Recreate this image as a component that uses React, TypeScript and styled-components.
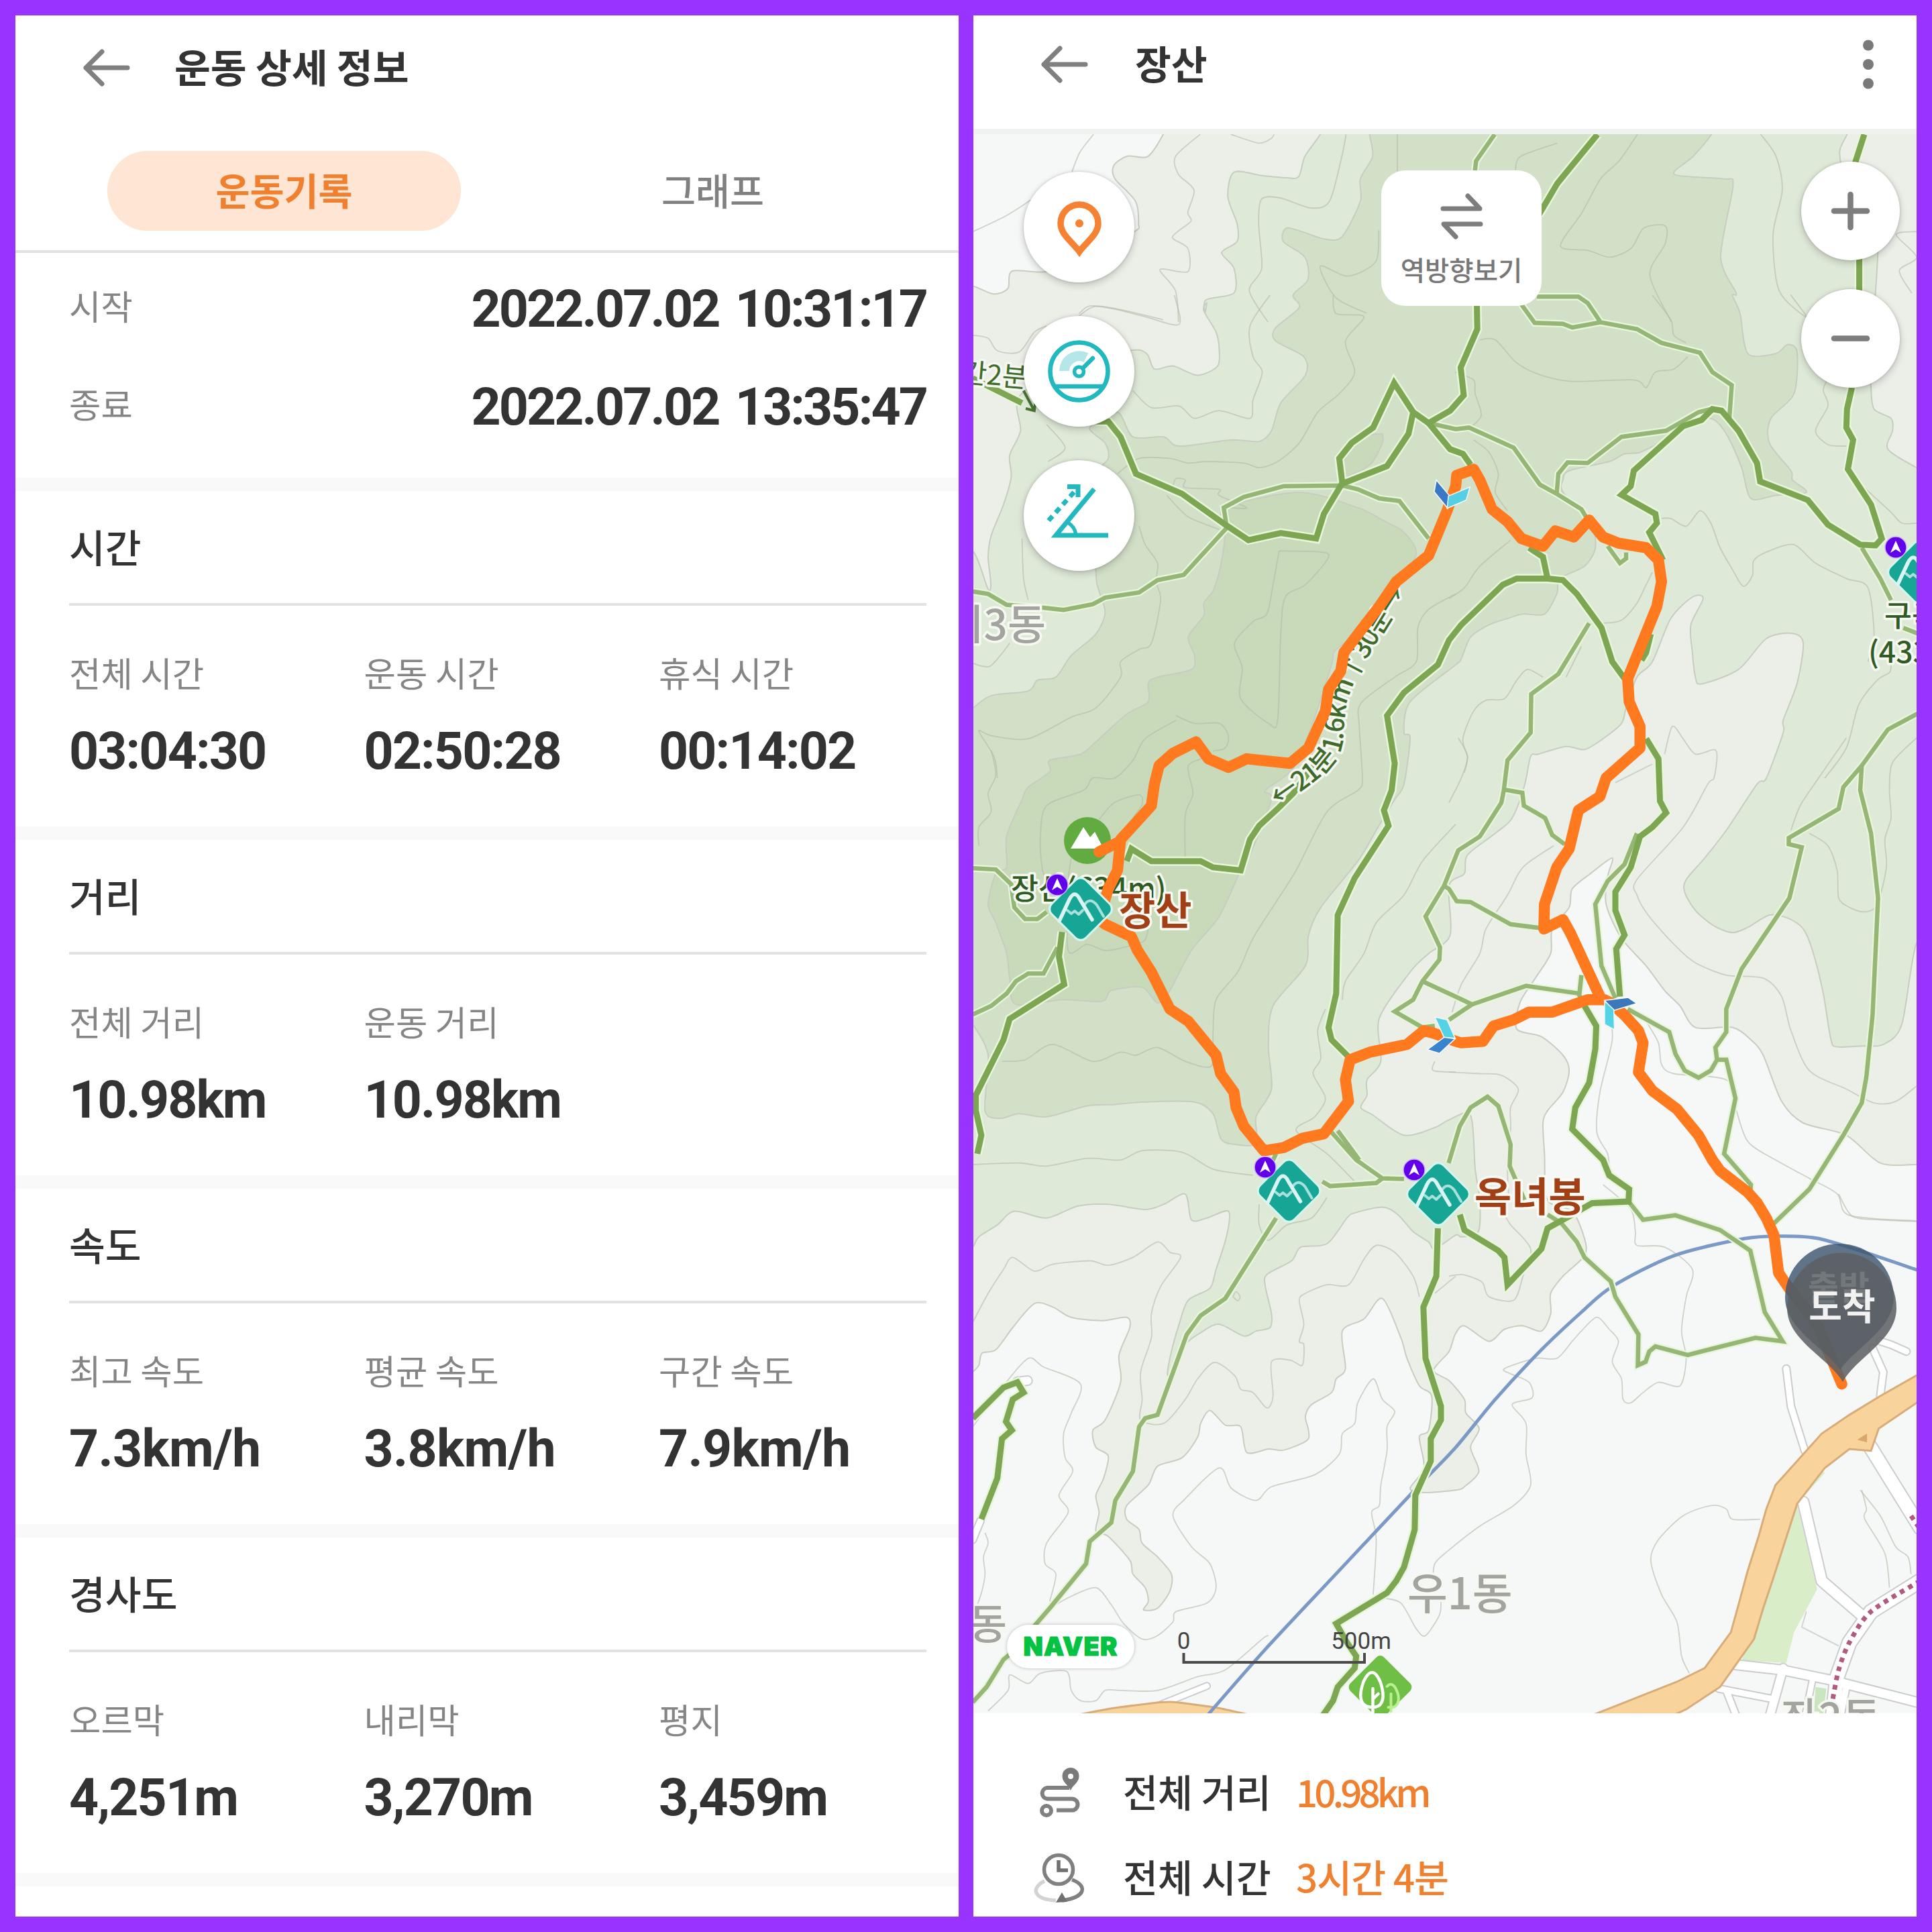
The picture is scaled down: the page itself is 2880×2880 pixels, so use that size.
import React from "react";
import styled, { createGlobalStyle } from "styled-components";

const GlobalStyle = createGlobalStyle`
  body {
    margin: 0;
    background-color: #9933ff;
    font-family: "Noto Sans CJK KR", "Noto Sans", sans-serif;
  }
  * {
    box-sizing: border-box;
  }
`;

const Screens = styled.div`
  display: flex;
  gap: 22px;
  width: 2880px;
  height: 2880px;
  padding: 23px;
  background-color: #9933ff;
`;

const Panel = styled.section`
  display: flex;
  flex-direction: column;
  width: 1406px;
  height: 2834px;
  overflow: hidden;
  background-color: #fff;
`;

const Header = styled.header<{ $height: number; $lift?: number }>`
  display: flex;
  align-items: center;
  flex: none;
  height: ${(p) => p.$height}px;
  padding: 0 62px ${(p) => p.$lift || 0}px 98px;
`;

const Title = styled.h1<{ $indent: number }>`
  flex: 1;
  margin: -5px 0 0 ${(p) => p.$indent}px;
  font-size: 58.5px;
  line-height: 1;
  font-weight: 700;
  color: #333;
`;

const Tabs = styled.nav`
  display: flex;
  gap: 112px;
  flex: none;
  height: 198px;
  padding: 46px 0 0 137px;
  border-bottom: 4px solid #e1e1e1;
`;

const Tab = styled.div<{ $active?: boolean }>`
  width: 527px;
  height: 119px;
  border-radius: 60px;
  background-color: ${(p) => (p.$active ? "#ffe5d3" : "transparent")};
  color: ${(p) => (p.$active ? "#f07f2e" : "#808080")};
  font-size: 55.5px;
  font-weight: ${(p) => (p.$active ? 700 : 500)};
  line-height: 115px;
  text-align: center;
`;

const Summary = styled.div`
  flex: none;
  height: 335px;
  padding: 8px 48px 0 80px;
`;

const SummaryRow = styled.div`
  display: flex;
  align-items: center;
  justify-content: space-between;
  height: 146px;
`;

const Label = styled.div`
  font-size: 51.5px;
  line-height: 60px;
  margin-top: -6px;
  color: #858585;
  white-space: nowrap;
`;

const Value = styled.div<{ $spacing?: number }>`
  font-family: Roboto, sans-serif;
  font-size: 77px;
  font-weight: 700;
  line-height: 80px;
  letter-spacing: ${(p) => p.$spacing ?? -1.9}px;
  color: #333;
  white-space: nowrap;
`;

const DateValue = styled(Value)`
  margin-top: 6px;
  letter-spacing: -2.9px;
  word-spacing: 8px;
`;

const Group = styled.section`
  flex: none;
  height: 520px;
  padding: 0 48px 0 80px;
  border-top: 20px solid #f9f9fa;
`;

const GroupTitle = styled.h2`
  height: 171px;
  margin: 0;
  border-bottom: 4px solid #e1e1e1;
  font-size: 58.5px;
  font-weight: 500;
  line-height: 164px;
  color: #333;
`;

const Stats = styled.div`
  display: grid;
  grid-template-columns: repeat(3, 439.5px);
  padding-top: 75px;
`;

const Stat = styled.div`
  display: flex;
  flex-direction: column;
  gap: 48px;
`;

const MapArea = styled.div`
  position: relative;
  flex: none;
  height: 2362px;
  overflow: hidden;
`;

const MapCanvas = styled.svg`
  display: block;
  width: 1406px;
  height: 2362px;
`;

const ButtonStack = styled.div<{ $side: "left" | "right" }>`
  position: absolute;
  top: ${(p) => (p.$side === "left" ? 64 : 49)}px;
  ${(p) => (p.$side === "left" ? "left: 75px" : "right: 25px")};
  display: flex;
  flex-direction: column;
  gap: ${(p) => (p.$side === "left" ? 50 : 43)}px;
`;

const RoundButton = styled.button<{ $size: number }>`
  width: ${(p) => p.$size}px;
  height: ${(p) => p.$size}px;
  padding: 0;
  border: none;
  border-radius: 50%;
  background-color: #fff;
  box-shadow: 0 4px 12px rgba(0, 0, 0, 0.2), 0 0 4px rgba(0, 0, 0, 0.15);

  svg {
    display: block;
    width: 100%;
    height: 100%;
  }
`;

const ReverseButton = styled.button`
  position: absolute;
  top: 62px;
  left: 608px;
  display: flex;
  flex-direction: column;
  align-items: center;
  gap: 16px;
  width: 239px;
  height: 202px;
  padding: 30px 0 0;
  border: none;
  border-radius: 36px;
  background-color: #fff;
  font-family: inherit;
  font-size: 39.5px;
  font-weight: 500;
  line-height: 50px;
  color: #777;
  white-space: nowrap;
`;

const NaverBadge = styled.div`
  position: absolute;
  left: 50px;
  top: 2230px;
  width: 190px;
  height: 65px;
  border-radius: 33px;
  background-color: #fff;
  box-shadow: 0 0 5px rgba(0, 0, 0, 0.25);
  font-family: Inter, sans-serif;
  font-size: 38px;
  font-weight: 900;
  line-height: 65px;
  letter-spacing: 1.2px;
  text-align: center;
  color: #06c242;
  -webkit-text-stroke: 1.2px #06c242;
`;

const Totals = styled.footer`
  padding: 55px 0 0 90px;
`;

const TotalRow = styled.div`
  display: grid;
  grid-template-columns: 133px 258px auto;
  align-items: center;
  height: 127px;
  font-size: 56.5px;
  line-height: 1;
  font-weight: 500;
  color: #333;
  white-space: nowrap;
`;

const TotalText = styled.span<{ $accent?: boolean; $tight?: number }>`
  margin-top: -6px;
  letter-spacing: ${(p) => p.$tight || 0}px;
  color: ${(p) => (p.$accent ? "#f07f2e" : "#333")};
`;

const groups = [
  {
    title: "시간",
    stats: [
      ["전체 시간", "03:04:30"],
      ["운동 시간", "02:50:28"],
      ["휴식 시간", "00:14:02"],
    ],
  },
  {
    title: "거리",
    stats: [
      ["전체 거리", "10.98km"],
      ["운동 거리", "10.98km"],
    ],
  },
  {
    title: "속도",
    spacing: -0.7,
    stats: [
      ["최고 속도", "7.3km/h"],
      ["평균 속도", "3.8km/h"],
      ["구간 속도", "7.9km/h"],
    ],
  },
  {
    title: "경사도",
    stats: [
      ["오르막", "4,251m"],
      ["내리막", "3,270m"],
      ["평지", "3,459m"],
    ],
  },
];

// Map sheets: x origin, y origin, x scale, y scale.
const K = 720 / 1568;
const sheets: Record<string, number[]> = {
  P: [0, 0, 1, 1],
  T: [1440, 0, 1440 / 1568, 1 / 3],
  NW: [1450, 440, K, K],
  NE: [2160, 440, K, K],
  W: [1450, 1100, K, K],
  E: [2160, 1100, K, K],
  SW: [1450, 1780, K, 800 / 1568],
  SE: [2160, 1780, K, 800 / 1568],
};

// "NW 10,20 30,40 NE 5,6": a sheet name applies to the points after it.
const points = (src: string): number[][] => {
  let s = sheets.P;
  const out: number[][] = [];
  src
    .trim()
    .split(/\s+/)
    .forEach((t) => {
      if (sheets[t]) {
        s = sheets[t];
        return;
      }
      const [x, y] = t.split(",").map(Number);
      out.push([s[0] + x * s[2], s[1] + y * s[3]]);
    });
  return out;
};

const f = (n: number) => n.toFixed(1);

const line = (src: string) =>
  "M" +
  points(src)
    .map(([x, y]) => `${f(x)} ${f(y)}`)
    .join("L");

const curve = (src: string) => {
  const p = points(src);
  let d = `M${f(p[0][0])} ${f(p[0][1])}`;
  for (let i = 0; i < p.length - 1; i++) {
    const a = p[i - 1] || p[i];
    const b = p[i];
    const c = p[i + 1];
    const e = p[i + 2] || c;
    d += `C${f(b[0] + (c[0] - a[0]) / 7)} ${f(b[1] + (c[1] - a[1]) / 7)} ${f(
      c[0] - (e[0] - b[0]) / 7
    )} ${f(c[1] - (e[1] - b[1]) / 7)} ${f(c[0])} ${f(c[1])}`;
  }
  return d;
};

const terrain: [string, string][] = [
  [
    "#ecefe8",
    `T 320,560 320,601 295,700 262,698 240,740 242,800 275,900 280,1000 274,1035 200,1150 130,1215 75,1212 68,1290 45,1315 12,1280 -20,1270
     SW -30,540 0,520 20,500 30,465 75,455 130,390 200,320 260,330 320,360 420,370 500,360 510,390 475,470 480,550 430,660 390,690 400,740 440,765 425,830 400,880 410,930 400,985 440,1000 510,1070 520,1110 560,1150 570,1190 555,1215 600,1210 640,1160 645,1110 600,1060 550,1020 540,980 500,950 500,910 570,850 600,795 680,770 730,710 740,670 770,632 820,675 870,680 890,755 960,745 1010,748 1085,720 1090,690 1080,650 1100,615 1165,580 1180,540 1210,510 1200,400 1270,365 1330,305 1390,420 1410,480 1450,560 1490,590 1480,690 1450,710 1465,800 1420,860 1465,872 1568,865
     SE 50,855 97,810 70,740 98,685 55,640 50,600 0,545 -50,515 0,460 20,410 50,385 130,430 180,395 240,385 300,400 330,350 330,290 370,240 440,180 440,130 400,50
     E 320,1500 310,1350 305,1250 320,1210 370,1150 390,1080 370,1030 300,970 220,945 230,860 280,780 330,700 335,620 390,550 400,490 460,440 530,390 515,450 510,540 560,650 640,740 700,820 750,870 800,940 920,940 980,980 1020,1030 1080,1180 1150,1250 1290,1290 1400,1380 1518,1385 1600,1385
     P 2900,150`,
  ],
  [
    "#dfe9d8",
    `T 575,560 575,601 550,700 540,790 520,795 480,785 435,770 425,880 440,1000 440,1080 415,1130 435,1200 435,1310 390,1340 388,1400
     NW 760,25 750,50 790,120 800,170 795,230 730,260 650,230 590,240 565,190 510,180 300,240 150,330 155,440 120,520 125,590 100,680 60,780 50,850 55,960 -30,960
     SW -30,165 0,155 20,125 80,90 135,50 240,70 340,35 440,30 560,45 620,30 690,0 710,75 760,70 830,50 825,120 790,220 770,275 700,310 670,380 640,480 635,530 690,440 740,405 800,380 880,415 920,400 965,390 970,350 950,270 955,235 1035,195 1065,155 1150,145 1215,70 1240,55 1330,38 1380,60 1430,110 1480,140 1500,160 1568,120
     SE 40,125 95,110 E 100,1500 85,1400 70,1225 0,1240 W 1500,1265 1400,1290 1300,1225 1260,1200 1280,1160 1280,1110 1325,1050 1320,910 1420,760 1480,700 1550,640
     E 0,480 50,440 60,380 150,310 205,260 245,155 265,60 NE 290,1490 380,1465 440,1475 500,1440 560,1390 575,1340 610,1240 660,1190 720,1050 790,980 825,985 785,1070 790,1160 800,1240 820,1262 940,1215 1030,1115 1115,1098 1150,1130 1130,1260 1085,1380 1085,1420 1030,1568
     E 1000,150 900,300 830,390 770,460 765,500 800,560 860,610 920,632 970,615 1040,575 1100,585 1150,620 1180,690 1215,830 1240,980 1260,1003 1340,1000 1410,995 1470,930 1518,665 1600,600
     NE 1600,600 1518,560 1425,500 1440,440 1435,400 1380,370 1370,300 1370,200 T 1480,950 1430,800 1418,680 1430,601 1430,560`,
  ],
  [
    "#d3e0c8",
    `T 655,560 655,601 660,700 640,800 640,900 610,1060 580,1068 550,1040 520,1020 515,1080 550,1150 555,1250
     NW 1040,0 1060,40 980,110 985,150 1075,200 1080,260 1000,350 970,440 930,475 840,470 670,490 620,460 520,460 470,380 380,430 430,480 440,530 400,600 400,900 410,960 430,1030 400,1100 320,1170 270,1240 210,1250 180,1285 60,1300 0,1340 -40,1350
     W -40,900 0,930 50,1030 40,1210 90,1235 150,1220 240,1230 370,1195 460,1190 560,1182 720,1182 780,1220 805,1300 840,1318 920,1318 920,1230 970,1140 960,1000 975,870 1080,740 1090,640 1130,550 1250,400 1310,300 1370,200 1400,150 1420,0
     NW 1400,1420 1420,1320 1568,1200 NE 40,1180 70,1110 130,1070 190,1050 240,1035 310,1035 350,970 360,920 440,880 475,820 460,740 370,640 370,600 390,570 520,540 570,515 620,510 700,470 770,430 850,400 900,450 950,560 980,660 1060,650 1160,640 1115,600 1110,570 1040,480 1045,400 1120,320 1130,185 1100,160 1060,190 970,190 945,60 920,0
     T 1250,1310 1225,1150 1245,830 1230,800 1150,780 1180,700 1210,601 1210,560`,
  ],
  [
    "#c8dab9",
    `NW 820,760 820,690 1060,640 1250,690 1330,730 1400,770 1440,840 1380,930 1300,1060 1180,1150 1165,1200 1100,1400
     W 1040,100 950,170 970,200 900,380 870,430 800,580 710,690 640,820 600,860 550,810 450,820 420,855 290,850 140,865 120,780 110,700 75,600 50,540 75,440 110,420 110,320 160,200 180,160 250,110
     NW 250,1510 350,1490 400,1450 500,1360 570,1320 570,1260 600,1240 710,1215 720,1170 700,1110 750,1040 750,1000 780,960 800,900 815,820 820,760`,
  ],
  ["#c8dab9", "NW 1330,450 1290,455 1240,490 1205,540 1205,590 1290,550 1330,480 1330,450"],
];

const contours = [
  "T 207,601 185,680 172,768",
  "T 105,895 65,965 12,1035",
  "T 380,601 340,700 345,780 370,850 360,950 365,990 335,1060 360,1110 360,1215 315,1205 340,1300 345,1440",
  "T 430,601 475,640 495,620 500,601",
  "T 180,1420 210,1370 260,1390 320,1430",
  "T 617,601 610,700 590,900 560,930 510,885 480,890 475,1000 480,1200 460,1300 490,1440",
  "T 700,601 700,765",
  "T 960,640 900,700 892,760",
  "T 1090,601 1060,720 1030,800 1000,950 965,1100 1010,1120 1045,1150 1080,1110 1100,1020 1135,1010 1135,1090 1110,1230 1145,1440",
  "T 1290,601 1315,700 1325,850 1310,1050 1320,1300 1365,1420 NE 1110,0 1155,60",
  "T 670,1030 665,1170 620,1235 575,1190 600,1330 650,1400",
  "T 1543,1035 1510,1050 T 1543,1150 1515,1210 1535,1310",
  "NW 345,60 380,35 460,45 560,70 670,95 655,0",
  "NW 0,130 50,140 80,180 150,185 200,120 240,100",
  "NW 965,0 900,100 910,200 940,250 910,340 900,400 800,375 720,400 670,360 580,365 520,310",
  "NW 1170,0 1180,60 1270,70 1210,150 1240,250 1190,320 1120,380 1060,480 990,540 930,560 880,545 760,540 700,545 640,530 540,530 470,580",
  "NW 240,420 300,495 245,540",
  "NW 160,790 165,920 180,990",
  "NW 540,750 560,810 600,870 595,930 610,990 580,1130 540,1150 480,1190 480,1240 400,1340 320,1370 180,1440 60,1430 20,1415 70,1500 80,1568",
  "NW 650,620 660,595 690,600 690,625 800,630 800,650 890,690 830,690",
  "NW 630,650 700,720 800,760",
  "NW 995,830 1140,835 1150,860 1080,940 1015,980 1000,1100 990,1380 960,1390 870,1310 875,1210 850,1130 910,1060 955,1035 975,940 995,830",
  "NW 0,1195 55,1205 105,1150 120,1130",
  "NW 660,1365 720,1390 800,1390 830,1430 820,1470 780,1480",
  "NW 660,1380 560,1440 520,1510 460,1568 W 390,130 360,170 240,220 220,320 225,420 240,470",
  "NW 1568,970 1480,1020 1445,1080 1440,1190 1370,1240 1260,1325 1255,1400 1265,1568 W 1250,170 1150,240 1050,430 980,540 910,650 860,760 790,850 780,960 775,1065 690,1050 600,1005 530,1030 480,1020 390,1050 260,995 170,1045 95,1050",
  "W 410,265 460,210 540,185 550,215 520,260",
  "W 320,390 310,470 W 310,690 370,670 430,690 490,680 555,660 570,620",
  "W 770,60 700,90 715,180 690,250 690,400",
  "W 60,40 75,120 50,180 60,240 20,290 20,350",
  "W 1568,280 1460,400 1400,510 1310,600 1270,700 1210,790 1200,850",
  "W 1145,880 1120,950 1130,1040 1105,1090 1145,1170 1110,1230 1050,1275 1150,1350 1240,1440",
  "W 0,1385 150,1380 240,1390 370,1365 480,1370 550,1340 680,1345 780,1400 910,1420",
  "NE 100,145 150,145 220,220 300,260 400,280 600,275 640,300 670,250 730,240 775,200",
  "NE 660,0 720,80 730,130 770,155",
  "NE 20,250 80,275 85,320 105,390 70,430",
  "NE 80,470 130,510 160,580 150,640 190,700",
  "NE 200,795 100,880 50,950 0,985",
  "NE 1225,280 1215,310 1230,360 1190,440 1230,485 1290,490",
  "NE 1310,590 1430,700 1470,740 1518,740",
  "NE 690,725 720,725 770,750 815,700 850,740 880,820 920,890 955,945 985,910 990,860 1040,830 1120,810 1190,870 1290,920 1360,950 1380,1110 1360,1190",
  "NE 1435,1200 1430,1225 1390,1250 1330,1330 1290,1470 1220,1568",
  "NE 500,1065 560,1055 610,1000 640,940 660,900",
  "NE 50,1550 60,1500 45,1440 80,1350 120,1315 180,1310 220,1250 255,1215 305,1240",
  "NE 380,1240 430,1140",
  "NE 700,1490 725,1400 760,1440 800,1490 860,1475 870,1500 860,1568 E 840,150 760,290 610,460 610,510 650,580 740,680 800,730 900,770 1020,780 1080,840 1110,950 1170,1080 1290,1140 1380,1185 1450,1180 1518,1130",
  "E 0,210 40,130 60,60 30,0",
  "E 1290,0 1200,130 1140,220 1110,300",
  "E 1518,0 1440,80 1430,170 1435,260 1415,330 1420,420 1390,540 1350,565 1300,550 1265,520 1260,430 1230,350 1170,310",
  "E 660,85 540,145",
  "E 340,350 240,420 190,510 120,620 100,700 40,800 10,890",
  "E 520,890 530,980 490,1150 480,1280 515,1350 520,1400",
  "E 640,920 680,990 690,1060 730,1090 900,1110 930,1200 970,1310 1060,1370 1170,1430 1260,1480 1300,1550 1518,1568",
  "E 0,1085 100,1090 170,1095 225,1140 200,1200 200,1270 190,1400 195,1500",
  "W 1500,1050 1495,1080 1568,1085",
  "E 500,1450 590,1530 SE 605,110 610,150 700,155 790,220 770,300 755,400 770,480 750,560 680,550 630,580 590,610 565,600 560,540 530,490 550,430 520,395 480,360 430,400 400,430 350,480 280,480 180,510 200,525 260,550 270,595 205,615 250,670 250,760 265,850 210,910 100,970 0,1040 SW 1500,1080 1495,1130",
  "SE 0,240 40,235 80,245 110,260 130,300 210,310 240,240 265,160 200,90 180,60",
  "SE 1265,0 1310,65 1400,75 1518,80",
  "SE 1010,950 920,950 900,920 850,910 760,940 680,1010 655,1070 690,1170 740,1250 755,1350 780,1400",
  "SE 1340,865 1355,920 1350,950 1415,1050 1430,1150",
  "SE 1335,865 1400,940 1450,1030 1490,1060 1500,1110",
  "SW 0,375 50,290 100,220 130,185 200,225 260,205 380,195 440,208 520,185 600,140 640,170 675,185 610,270 580,350 580,420 545,520 550,600 545,660 620,670 690,600 730,540 785,492 850,530 870,570 910,580 955,625 975,590 970,490 1030,485 1070,500 1075,440 1060,430 1075,380 1060,310 1080,290 1150,265 1220,265 1270,190 1310,150 1370,170 1430,240 1450,300",
  "SW 0,680 100,560 180,480 230,505 350,555 320,640 295,700 300,770 325,810 280,880 310,930 240,1020 235,1080 270,1110 250,1190",
  "SW 250,1210 320,1175 400,1150 450,1200 490,1255 550,1300 600,1290 650,1250 660,1220 760,1195 790,1150 770,1080 710,1030 650,940 690,890 800,800 840,860 920,895 970,855 1110,820 1190,760 1200,700 1240,670 1250,610 1300,540 1330,600 1370,635 1345,680 1345,750 1325,850 1320,910 1295,930 1310,1010 1300,1170",
  "SW 1330,1180 1390,1195 1440,1270 1470,1290 1515,1230 1520,1190",
  "SW 50,1510 115,1450 120,1405 180,1430 220,1400 305,1395 320,1450 350,1480 400,1480 430,1450 480,1450 600,1450 730,1410 820,1390 940,1300 960,1290",
  "SW 40,990 50,1020 35,1060 40,1110 30,1160 15,1200",
  "SW 930,30 930,90 960,135 1020,90 1100,70 1150,10",
  "SW 845,300 855,285 868,300 860,312 845,300",
  "SW 1500,290 1568,240",
];

const lightTrails = [
  "NW 0,962 50,970 110,1005 230,1015 295,1022 390,1003 430,982 540,965 600,925 685,908 825,755 815,690 880,655 1010,620 1200,618 1250,630 1320,660 1385,668 1480,790",
  "T 858,601 828,720 826,765",
  "NE 285,5 420,5 450,25 492,88 610,110 690,155 815,187 855,250 918,292 910,400",
  "NE 235,30 278,90 370,93 400,105 492,88",
  "NW 1480,415 1568,435 NE 65,430 210,495 295,615 350,645 430,695 445,720",
  "NE 350,640 355,580 385,543 450,545 560,460 705,440 810,380 850,370",
  "NE 455,1065 355,1230 267,1295 265,1420 190,1510 E 178,170 170,210 100,320 30,365 W 1530,480 1470,580 1517,680 1515,720 1460,790 1430,850 1370,888 1460,940 1500,935",
  "W 1460,790 1568,840 E 75,865 0,915",
  "E 75,865 250,805 425,830",
  "W 1530,480 E 0,490 25,530 70,533 200,605 295,617",
  "E 180,168 238,178 243,220 312,260 335,315 375,345",
  "E 610,310 570,410 515,465 475,540 495,740 540,845",
  "E 430,770 423,835 440,870",
  "E 580,880 715,955 735,1025 765,1080 810,1103 850,1080 870,1045 865,1005 900,955 900,880 950,750 1105,520 1145,355 1103,345 1103,325 1265,230 1280,160 1340,90 1405,0 NE 1425,1410 1518,1360 1560,1345",
  "E 1340,90 1335,170 1370,310 1393,520 1375,900 1355,1100 1340,1185 1280,1290 1170,1465 SE 1050,90",
  "E 870,1045 900,1045 930,1170 893,1350 980,1450 978,1480",
  "E 583,1505 SE 630,75 735,62 880,105 978,165 1025,345 1083,430 995,420 775,470 670,445 650,460 638,490 613,500 615,410 540,300 525,255 440,185 415,140 365,85 320,60",
  "W 1545,1380 E 35,1260 70,1200 125,1165 160,1195 200,1320 197,1390 245,1500",
  "W 1165,1280 1245,1370 1330,1430 1400,1432",
  "W 1185,1275 1255,1370",
  "W 1135,1440 1160,1455 1310,1445 1330,1430",
  "W 985,1350 970,1380",
  "SW 985,70 820,305 740,355 695,410 600,645 560,655 540,680 520,810 463,895 450,960 380,1015 368,1080 250,1210 120,1345 100,1360 45,1440 0,1485",
  "W 0,423 75,427 125,475 135,550 170,588 210,588 240,565",
  "W 275,680 230,765 180,765 140,790 110,830 60,870 0,898",
  "NE 1340,820 1400,920 1435,990",
  "NE 1475,1080 1530,1102",
  "NE 515,815 555,870 575,855 575,835",
];

const darkTrails = [
  "NW 0,270 80,310 160,350",
  "NW 400,410 440,410 480,460 530,580 680,645 820,745 895,795 1000,772 1115,790 1140,710 1200,610 1190,530 1230,480 1300,430 1368,285 1430,380 1415,450 1345,555 1200,612",
  "NW 1430,380 1480,415 1550,375 NE 48,325 38,235 92,110 90,0",
  "T 1025,601 960,820 930,960",
  "NW 1480,415 1550,500 NE 45,515 70,550",
  "NE 260,820 305,850 320,920 220,920 175,940 40,1070 0,1120 NW 1510,1200 1400,1290 1345,1365 1370,1520 W 1360,170 1335,235 1350,285 1240,455 1185,575 1180,830 1155,940 1165,980 1225,1040",
  "NE 320,920 370,925 415,970 495,1080 530,1190 570,1245",
  "NE 640,1440 680,1505 E 685,205 705,243 660,290 620,320 590,420 540,500 540,560 570,640 543,685 555,840",
  "NE 655,1100 640,1160 625,1185",
  "NE 695,860 650,770 675,740 670,710 560,648 590,620 600,570 760,425 820,405 855,370 885,375 940,440 1000,545 1010,605 1165,665 1230,745 1335,810 1385,812 1405,790 1370,680 1295,565 1312,470 1290,430 1292,370 1308,300",
  "T 1450,1300 1450,1150",
  "T 1443,730 1458,601",
  "NW 1150,1440 W 1130,60 1040,180 990,230 930,285 900,330 870,430 780,420 740,400 580,400 515,360 500,400",
  "W 290,630 280,710 297,800 120,912 100,980 10,1160 10,1210 28,1290 15,1350",
  "E 440,870 478,935 475,1010 455,1120 410,1200 400,1270 500,1370 520,1420 585,1465 583,1505 465,1510 430,1530 SE 400,60 320,100 300,160 190,265 180,185 160,165 50,105 35,60",
  "SW 1510,100 1505,240 1463,330 1470,480 1520,620 1520,660 1487,715 1487,780 1437,880 1435,980 1400,1090 1375,1130 1345,1165 1180,1255 1215,1310 1245,1350 1240,1385 1185,1440 1170,1480 1135,1525",
  "SW 0,655 100,565 145,550 165,580 130,600 108,665 127,690 95,715 80,830 28,950",
];

const route = `SE 1275,555 1200,390 1170,350 1100,270 1070,230 1055,120 1030,70 1000,25 E 970,1475 880,1405 855,1370 810,1290 740,1205 660,1145 615,1085 630,990 615,950 570,900 525,860 505,850 450,850 335,890 260,890 210,915 145,935 110,985 40,990
  W 1568,985 1500,960 1465,950 1410,995 1290,1020 1225,1045 1210,1110 1220,1180 1140,1285 1070,1300 1010,1330 945,1340 880,1260 855,1200 848,1150 805,1090 790,1030 700,920 640,880 580,760 535,690 515,645 430,605 410,590 440,490 470,430 480,330 580,220 590,150 605,90 650,50
  NW 725,1450 765,1505 830,1533 890,1505 1030,1520 1090,1470 1145,1350 1155,1280 1195,1220 1205,1160 1320,1010 1375,930 1480,845 1540,700 1568,620
  NE 25,585 80,565 100,600 140,695 190,735 235,790 305,815 345,765 405,785 455,730 500,785 550,805 640,820 680,860 690,930 675,1010 580,1245 585,1320 620,1400 620,1470
  E 510,130 490,190 420,235 390,360 350,420 310,540 308,620 370,590 395,635 490,840`;

const whiteRoads: [string, number][] = [
  ["SE 1095,510 1110,620 1155,750", 9],
  ["SE 1375,450 1410,520 1400,590", 9],
  ["SE 1400,430 1435,440 1485,460", 9],
  ["SE 1365,735 1530,975", 19],
  ["SE 1150,900 1210,1130 1345,1235", 15],
  ["SE 930,1375 1080,1390 1240,1420 1530,1487", 13],
  ["SE 1085,1385 1040,1530", 12],
  ["SE 875,1445 1050,1475", 9],
  ["SE 900,1450 935,1530", 9],
  ["SE 1180,1420 1155,1530", 8],
  ["SE 1290,1440 1270,1530", 9],
  ["SE 1530,1130 1370,1220 1300,1310 1260,1410 1245,1530", 20],
  ["SW 560,1510 760,1437", 8],
  ["SW 145,548 178,545", 12],
  ["SW 0,1010 25,955", 9],
];

const Summit = ({ x, y }: { x: number; y: number }) => (
  <g transform={`translate(${x} ${y})`}>
    <rect
      x="-36"
      y="-36"
      width="72"
      height="72"
      rx="11"
      transform="rotate(45)"
      fill="#17a596"
      stroke="#d5f6ef"
      strokeWidth="3"
    />
    <g fill="none" stroke="#d8f5f1" strokeLinecap="round" strokeLinejoin="round">
      <path d="M-32 18L-17 -14Q-9 -30 -1 -14L17 16" strokeWidth="5.5" />
      <path
        d="M6 -7Q14 -18 24 -6L34 11M-20 2L-14 7L-9 3L-3 8L3 2"
        strokeWidth="4"
        opacity="0.75"
      />
    </g>
  </g>
);

const Heading = ({ x, y }: { x: number; y: number }) => (
  <g transform={`translate(${x} ${y})`}>
    <circle r="16" fill="#6200ea" stroke="#cbb0f5" strokeWidth="1.5" />
    <path d="M0 -10L8 8L0 3L-8 8Z" fill="#fff" />
  </g>
);

const TrailMap = () => (
  <MapCanvas viewBox="1451 192 1406 2362">
    <rect x="1451" y="192" width="1406" height="2362" fill="#f6f7f7" />
    {terrain.map(([fill, d], i) => (
      <path key={i} d={curve(d) + "Z"} fill={fill} stroke="#c7cdc0" strokeWidth="2" />
    ))}
    <g fill="none" stroke="#b3bcaa" strokeOpacity="0.62" strokeWidth="1.8">
      {contours.map((d, i) => (
        <path key={i} d={curve(d)} />
      ))}
    </g>

    <path
      d={line("SE 1130,905 1195,1155 1120,1280 1095,1370 950,1362 1050,1130") + "Z"}
      fill="#d8edc8"
    />
    <path d={line("SE 1220,815 1150,885 1140,880 1200,800") + "Z"} fill="#d8edc8" />
    <path d={line("SE 1190,1440 1225,1445 1215,1520 1185,1515") + "Z"} fill="#c9e6bf" />
    <path
      d={line("SE 1265,1320 1145,1265 1160,1220")}
      fill="none"
      stroke="#d4d4d4"
      strokeWidth="2"
    />
    <g fill="none" strokeLinecap="round" strokeLinejoin="round">
      {whiteRoads.map(([d, w], i) => (
        <path key={i} d={line(d)} stroke="#cbcccd" strokeWidth={w + 4} />
      ))}
      {whiteRoads.map(([d, w], i) => (
        <path key={i} d={line(d)} stroke="#fff" strokeWidth={w} />
      ))}
    </g>
    <path
      d={curve("SE 1530,1130 1370,1220 1300,1310 1265,1390 1245,1480")}
      fill="none"
      stroke="#b35a80"
      strokeWidth="7"
      strokeDasharray="7 7"
    />
    <path d={line("SE 1500,940 1530,980")} stroke="#b35a80" strokeWidth="7" strokeDasharray="7 7" />
    <g fill="#f8d49c" stroke="#d8ac78" strokeWidth="3">
      <path
        d={
          line(
            "SE 1560,508 1518,530 1400,590 1300,645 1210,700 1130,780 1060,850 1030,920 1005,1000 970,1100 940,1200 915,1280 830,1385 740,1425 430,1535 700,1535 770,1505 880,1440 990,1300 1020,1210 1050,1130 1130,905 1220,800 1300,745 1370,750 1395,685 1518,610 1560,590"
          ) + "Z"
        }
      />
      <path d={curve("SW 340,1522 450,1503 560,1490 640,1484 740,1494 800,1502 900,1522")} />
    </g>
    <path d={line("SE 1325,718 1357,700 1357,725") + "Z"} fill="#d9a76c" />
    <path
      d={curve(
        "SW 760,1525 950,1330 1200,1090 1440,860 1568,740 SE 150,600 300,455 430,345 530,270 730,180 960,130 1090,123 1200,130 1350,170 1530,225"
      )}
      fill="none"
      stroke="#7a99c6"
      strokeWidth="5"
    />

    <g fill="none" strokeLinejoin="miter">
      {lightTrails.map((d, i) => (
        <path key={i} d={line(d)} stroke="#e8f6dc" strokeWidth="11" />
      ))}
      {darkTrails.map((d, i) => (
        <path key={i} d={line(d)} stroke="#e8f6dc" strokeWidth="14" />
      ))}
      {lightTrails.map((d, i) => (
        <path key={i} d={line(d)} stroke="#95b674" strokeWidth="6.5" />
      ))}
      {darkTrails.map((d, i) => (
        <path key={i} d={line(d)} stroke="#7ca651" strokeWidth="9" />
      ))}
    </g>

    <g
      fontFamily='"Noto Sans CJK KR", sans-serif'
      paintOrder="stroke"
      stroke="#f6f8f2"
      strokeWidth="7"
      strokeLinejoin="round"
    >
      <g fill="#a3a39f" fontSize="62" fontWeight="500">
        <text x="1559" y="954" textAnchor="end">
          기3동
        </text>
        <text x="1501" y="2444" textAnchor="end">
          동
        </text>
        <text x="2098" y="2399" fontSize="65">
          우1동
        </text>
        <text x="2654" y="2584" fontSize="62">
          좌2동
        </text>
      </g>
      <g fill="#2f5c22" fontSize="44.500" fontWeight="500">
        <text x="1507" y="1341">
          장산(634m)
        </text>
        <text x="2809" y="934">
          구곡산
        </text>
        <text x="2785" y="988">
          (433m)
        </text>
      </g>
      <g fill="#3f6b2a" fontSize="41">
        <text x="1530" y="578" textAnchor="end" transform="rotate(5 1530 578)">
          약간2분
        </text>
        <path
          id="trail-label"
          d={curve("W 993,225 1130,125 1195,40 NW 1205,1400 1222,1300 1280,1180 1400,985 1450,910")}
          fill="none"
          stroke="none"
        />
        <text fontSize="40" fontWeight="500">
          <textPath href="#trail-label" textLength="385">
            ←21분 1.6km↑30분→
          </textPath>
        </text>
      </g>
    </g>
    <path
      d={line("NW 165,310 200,375") + line("NW 172,368 200,375 204,345")}
      fill="none"
      stroke="#4a7632"
      strokeWidth="4"
    />

    <circle cx="1621" cy="1253" r="35" fill="#62ab41" />
    <path d="M1596 1265L1615 1233L1625 1248L1632 1240L1645 1265Z" fill="#fff" />

    <g fill="none" stroke="#ff7a1f" strokeWidth="16.5" strokeLinejoin="round" strokeLinecap="round">
      <path d={line(route)} />
      <path d={line("W 470,340 410,370")} />
    </g>

    <g stroke="#f4fbfd" strokeWidth="1.5">
      <path d={line("NW 1505,600 1547,650 1542,692 1498,638") + "Z"} fill="#3a78c6" />
      <path d={line("NE 68,623 56,665 -6,692 -2,652") + "Z"} fill="#55cfe3" />
      <path d={line("W 1500,906 1540,915 1566,975 1530,972") + "Z"} fill="#55d3e6" />
      <path d={line("W 1566,977 1515,1024 1476,1012 1530,972") + "Z"} fill="#3a84cd" />
      <path d={line("E 505,852 582,843 610,862 534,885") + "Z"} fill="#3a78bb" />
      <path d={line("E 505,854 535,882 537,947 505,930") + "Z"} fill="#55d3e6" />
    </g>

    <Summit x={1611} y={1355} />
    <Summit x={1921.5} y={1775} />
    <Summit x={2144} y={1780} />
    <Summit x={2861} y={853} />
    <Heading x={1576} y={1319} />
    <Heading x={1886} y={1740} />
    <Heading x={2108} y={1744} />
    <Heading x={2826} y={816} />

    <g transform="translate(2057.5 2515)">
      <rect x="-35.5" y="-35.5" width="71" height="71" rx="8" transform="rotate(45)" fill="#6fbe45" />
      <g fill="none" strokeLinecap="round">
        <path
          d="M10 -1Q16 -8 22 0Q30 14 26 24Q22 32 12 30M16 10V36"
          stroke="#b9f08e"
          strokeWidth="4"
        />
        <path
          d="M-11 30C-32 30 -32 12 -25 -8Q-12 -36 0 -8C7 12 6 30 -11 30M-11 2V42M-11 18L-3 10"
          stroke="#fff"
          strokeWidth="4.5"
        />
      </g>
    </g>

    <g
      fontFamily='"Noto Sans CJK KR", sans-serif'
      fontWeight="700"
      fill="#a33f14"
      paintOrder="stroke"
      stroke="#fbfaf5"
      strokeWidth="7"
      strokeLinejoin="round"
    >
      <text x="1668" y="1379" fontSize="59">
        장산
      </text>
      <text x="2198" y="1806" fontSize="60">
        옥녀봉
      </text>
    </g>

    {/* start pin, mostly covered by the finish pin */}
    <path
      d="M2743 2042C2722 2010 2661 1982 2661 1934A81 80 0 0 1 2823 1934C2823 1982 2764 2010 2743 2042Z"
      fill="#3d5670"
      opacity="0.82"
    />
    <path
      d="M2747 2060C2724 2022 2664 1998 2664 1950A81 82 0 0 1 2827 1950C2827 1998 2768 2022 2747 2060Z"
      fill="#5c6062"
      opacity="0.86"
    />
    <g fontFamily='"Noto Sans CJK KR", sans-serif' textAnchor="middle" fontWeight="700">
      <text x="2741" y="1938" fontSize="50" fill="#fff" opacity="0.14">
        출발
      </text>
      <text x="2746" y="1968" fontSize="54" fill="#f2f2f2">
        도착
      </text>
    </g>

    <g fill="none" stroke="#4a4a4a" strokeWidth="4">
      <path d="M1764.5 2464V2478H2034V2464" />
    </g>
    <g fontFamily="Roboto, sans-serif" fontSize="35" fill="#444" textAnchor="middle">
      <text x="1764.5" y="2458">0</text>
      <text x="2029" y="2458">500m</text>
    </g>
    <rect x="1451" y="192" width="1406" height="8" fill="#f0f2f0" />
  </MapCanvas>
);

const BackArrow = () => (
  <svg width="75" height="60" viewBox="0 0 75 60">
    <path
      d="M69 30H7M31 6L7 30L31 54"
      fill="none"
      stroke="#808080"
      strokeWidth="7"
      strokeLinecap="round"
      strokeLinejoin="round"
    />
  </svg>
);

const MoreIcon = () => (
  <svg width="20" height="76" viewBox="0 0 20 76" fill="#7a7a7a">
    <circle cx="10" cy="9.5" r="8" />
    <circle cx="10" cy="38" r="8" />
    <circle cx="10" cy="66.5" r="8" />
  </svg>
);

const PinIcon = () => (
  <svg viewBox="0 0 165 165" fill="none" stroke="#f58233" strokeWidth="9.5">
    <path d="M83 119C73 105 55 94 55 77A28 28 0 0 1 111 77C111 94 93 105 83 119Z" />
    <circle cx="83" cy="77" r="6" fill="#f58233" stroke="none" />
  </svg>
);

const GaugeIcon = () => (
  <svg viewBox="0 0 165 165" fill="none" stroke="#22b8c0" strokeWidth="6.5">
    <path d="M60.5 82A22.5 22.5 0 0 1 93 62" stroke="#b4e6ea" strokeWidth="15" />
    <circle cx="82.5" cy="82.5" r="43" />
    <circle cx="82.5" cy="83" r="7" strokeWidth="5.5" />
    <path d="M88 78L103 63" strokeLinecap="round" />
    <path d="M46 105H119" />
  </svg>
);

const SlopeIcon = () => (
  <svg viewBox="0 0 165 165" fill="none" stroke="#22b8c0" strokeWidth="7">
    <path d="M37 90L80 42" strokeDasharray="9 7" />
    <path d="M65 39.5H81V55" />
    <path d="M105 43L48 112H126" />
    <path d="M66 93Q76 99 78 111" strokeWidth="5.5" />
  </svg>
);

const PlusIcon = () => (
  <svg viewBox="0 0 147 147" stroke="#7d7d7d" strokeWidth="8.5" strokeLinecap="round">
    <path d="M49 73.5H98M73.5 49V98" />
  </svg>
);

const MinusIcon = () => (
  <svg viewBox="0 0 147 147" stroke="#7d7d7d" strokeWidth="8.5" strokeLinecap="round">
    <path d="M49 73.5H98" />
  </svg>
);

const ReverseIcon = () => (
  <svg width="70" height="76" viewBox="0 0 70 76">
    <path
      d="M7 27H62L44 8M63 50H8L26 69"
      fill="none"
      stroke="#7d7d7d"
      strokeWidth="7"
      strokeLinecap="round"
      strokeLinejoin="round"
    />
  </svg>
);

const RouteIcon = () => (
  <svg width="78" height="82" viewBox="0 0 78 82">
    <g fill="none" stroke="#808080" strokeWidth="6">
      <path d="M53 33H20A8.3 8.3 0 0 0 20 49.5H57A8.3 8.3 0 0 1 57 66.5H34" />
      <circle cx="19" cy="67" r="7" />
    </g>
    <path
      fillRule="evenodd"
      d="M55 3A12.500 12.500 0 0 1 67.500 16C67.500 25 58 29 55 37C52 29 42.500 25 42.500 16A12.500 12.500 0 0 1 55 3ZM55 12A4 4 0 1 0 55 20A4 4 0 1 0 55 12Z"
      fill="#7a7a7a"
    />
  </svg>
);

const ClockIcon = () => (
  <svg width="78" height="82" viewBox="0 0 78 82" fill="none" strokeWidth="5.5">
    <path d="M16 45C-4 55 -2 72 33 74" stroke="#d3d3d3" />
    <path d="M57 43C79 51 80 69 42 74" stroke="#808080" />
    <path d="M42 62L33 77L50 76Z" fill="#707070" />
    <circle cx="37" cy="28" r="21.500" stroke="#808080" />
    <path d="M37 14V29H51" stroke="#707070" />
  </svg>
);

const App: React.FC = () => {
  return (
    <Screens>
      <GlobalStyle />
      <Panel>
        <Header $height={156}>
          <BackArrow />
          <Title $indent={64}>운동 상세 정보</Title>
        </Header>
        <Tabs>
          <Tab $active>운동기록</Tab>
          <Tab>그래프</Tab>
        </Tabs>
        <Summary>
          <SummaryRow>
            <Label>시작</Label>
            <DateValue>2022.07.02 10:31:17</DateValue>
          </SummaryRow>
          <SummaryRow>
            <Label>종료</Label>
            <DateValue>2022.07.02 13:35:47</DateValue>
          </SummaryRow>
        </Summary>
        {groups.map((group) => (
          <Group key={group.title}>
            <GroupTitle>{group.title}</GroupTitle>
            <Stats>
              {group.stats.map(([label, value]) => (
                <Stat key={label}>
                  <Label>{label}</Label>
                  <Value $spacing={group.spacing}>{value}</Value>
                </Stat>
              ))}
            </Stats>
          </Group>
        ))}
        <Group />
      </Panel>

      <Panel>
        <Header $height={169} $lift={23}>
          <BackArrow />
          <Title $indent={68}>장산</Title>
          <MoreIcon />
        </Header>
        <MapArea>
          <TrailMap />
          <ButtonStack $side="left">
            <RoundButton $size={165}>
              <PinIcon />
            </RoundButton>
            <RoundButton $size={165}>
              <GaugeIcon />
            </RoundButton>
            <RoundButton $size={165}>
              <SlopeIcon />
            </RoundButton>
          </ButtonStack>
          <ReverseButton>
            <ReverseIcon />
            역방향보기
          </ReverseButton>
          <ButtonStack $side="right">
            <RoundButton $size={147}>
              <PlusIcon />
            </RoundButton>
            <RoundButton $size={147}>
              <MinusIcon />
            </RoundButton>
          </ButtonStack>
          <NaverBadge>NAVER</NaverBadge>
        </MapArea>
        <Totals>
          <TotalRow>
            <RouteIcon />
            <TotalText>전체 거리</TotalText>
            <TotalText $accent $tight={-5}>
              10.98km
            </TotalText>
          </TotalRow>
          <TotalRow>
            <ClockIcon />
            <TotalText>전체 시간</TotalText>
            <TotalText $accent $tight={-1}>
              3시간 4분
            </TotalText>
          </TotalRow>
        </Totals>
      </Panel>
    </Screens>
  );
};

export default App;
